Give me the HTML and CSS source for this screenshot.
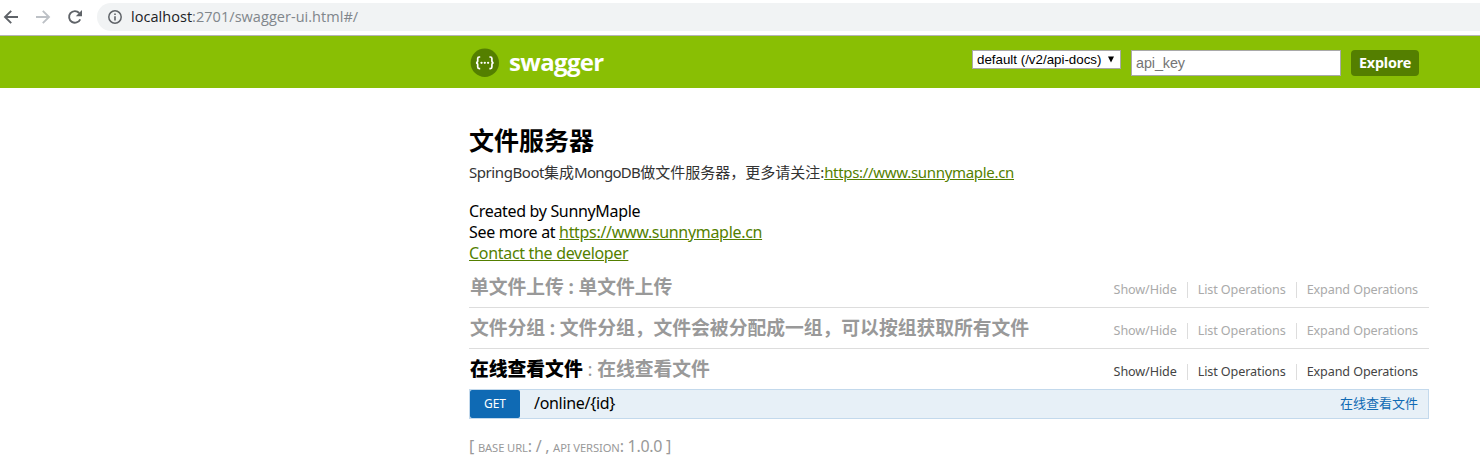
FILE: index.html
```html
<!DOCTYPE html>
<html lang="zh">
<head>
<meta charset="utf-8">
<title>Swagger UI</title>
<link rel="stylesheet" href="styles.css">
</head>
<body>
<div class="browser">
  <svg class="nav" width="84" height="34" viewBox="0 0 84 34" fill="none" stroke="#5f6368" stroke-width="1.9">
    <path d="M18 17H5.500M11.200 10.800L5 17l6.200 6.200"/>
    <path d="M36 17h12.500M42.800 10.800L49 17l-6.200 6.200" stroke="#bdc1c6"/>
    <path d="M80.200 19.300A5.800 5.800 0 1 1 79.200 13"/>
    <path d="M82 10v6.200h-6.200z" fill="#5f6368" stroke="none"/>
  </svg>
  <div class="address">
    <svg width="14" height="14" viewBox="0 0 14 14"><circle cx="7" cy="7" r="6.200" fill="none" stroke="#5f6368" stroke-width="1.500"/><path d="M6.200 6.200h1.600v4.300H6.200zM6.200 3.500h1.600v1.600H6.200z" fill="#5f6368"/></svg>
    <span class="url"><b>localhost</b>:2701/swagger-ui.html#/</span>
  </div>
</div>
<header class="header">
  <div class="bar">
    <a class="logo">
      <svg width="30" height="30" viewBox="0 0 30 30"><circle cx="14.800" cy="14.800" r="14.200" fill="#547f00"/><g fill="none" stroke="#fff" stroke-width="1.700"><path d="M10.200 9H9.200q-1.500 0-1.500 1.500v2.300q0 1.900-1.700 2 1.700.1 1.700 2v2.300q0 1.500 1.500 1.500h1M19.400 9h1q1.500 0 1.500 1.500v2.300q0 1.900 1.700 2-1.700.1-1.700 2v2.300q0 1.500-1.500 1.500h-1"/></g><g fill="#fff"><circle cx="11.500" cy="14.800" r="1.150"/><circle cx="14.800" cy="14.800" r="1.150"/><circle cx="18.100" cy="14.800" r="1.150"/></g></svg>
      <span class="brand">swagger</span>
    </a>
    <div class="form">
      <div class="select"><span class="option">default (/v2/api-docs)</span><svg width="6" height="7" viewBox="0 0 6 7"><path d="M0 .5h6L3 6.500z"/></svg></div>
      <input class="key" placeholder="api_key">
      <a class="explore">Explore</a>
    </div>
  </div>
</header>
<main class="content">
  <h1 class="title">文件服务器</h1>
  <p class="desc"><span class="product">SpringBoot</span>集成<span class="database">MongoDB</span>做文件服务器，更多请关注:<a class="link">https://www.sunnymaple.cn</a></p>
  <div class="info">
    <div>Created by SunnyMaple</div>
    <div>See more at <a class="link">https://www.sunnymaple.cn</a></div>
    <div><a class="link">Contact the developer</a></div>
  </div>
  <section class="resource">
    <h2>单文件上传<i class="colon">:</i>单文件上传</h2>
    <ul class="options"><li>Show/Hide</li><li>List Operations</li><li>Expand Operations</li></ul>
  </section>
  <section class="resource">
    <h2>文件分组<i class="colon">:</i>文件分组，文件会被分配成一组，可以按组获取所有文件</h2>
    <ul class="options"><li>Show/Hide</li><li>List Operations</li><li>Expand Operations</li></ul>
  </section>
  <section class="resource active">
    <h2><strong>在线查看文件</strong><i class="colon thin">:</i>在线查看文件</h2>
    <ul class="options"><li>Show/Hide</li><li>List Operations</li><li>Expand Operations</li></ul>
  </section>
  <div class="operation"><span class="method">GET</span><span class="path">/online/{id}</span><span class="summary">在线查看文件</span></div>
  <footer class="footer">[ <small>BASE URL</small>: / , <small>API VERSION</small>: 1.0.0 ]</footer>
</main>
</body>
</html>
```
FILE: styles.css
```css
* { box-sizing: border-box; }
body { margin: 0; height: 462px; overflow: hidden; background: #fff; color: #000; font: 16px/21px "Noto Sans", "Noto Sans CJK SC", sans-serif; }
.browser { display: flex; height: 35px; background: #fff; }
.nav { flex: none; }
.address { display: flex; align-items: center; gap: 9px; flex: 1; height: 28px; margin: 3px 0 0 13px; padding-left: 11px; border-radius: 14px 0 0 14px; background: #f1f3f4; }
.url { font: 14.5px/28px "Open Sans", sans-serif; letter-spacing: .04px; color: #80868b; }
.url b { font-weight: 400; color: #202124; }
.header { height: 53px; border-top: 1px solid #b6b4b6; background: #89bf04; }
.bar { display: flex; justify-content: space-between; width: 950px; margin-left: 470px; }
.logo { display: flex; gap: 9px; padding-top: 12px; }
.brand { font: 700 24px/28px "Open Sans", sans-serif; letter-spacing: -.65px; color: #fff; }
.form { display: flex; align-items: flex-start; padding-top: 14px; margin-right: 1px; }
.select { display: flex; align-items: center; justify-content: space-between; width: 149px; height: 19px; padding: 0 6px 0 4px; border: 1px solid #a9a9a9; background: #fff; font: 13.333px/17px "Liberation Sans", sans-serif; }
.key { width: 210px; height: 26px; margin: 0 10px; padding: 0 4px; border: 1px solid #a9a9a9; font: 14.4px "Liberation Sans", sans-serif; letter-spacing: -.1px; }
.key::placeholder { color: #757575; }
.explore { width: 68px; height: 26px; border-radius: 4px; background: #547f00; color: #fff; text-align: center; font: 700 14.4px/26px "Noto Sans", sans-serif; letter-spacing: -.2px; }
.content { width: 960px; margin-left: 469px; padding-top: 36px; }
.title { margin: 0; font: 700 25px/31px "Noto Sans CJK SC", sans-serif; }
.desc { margin: 7px 0 18px; color: #333; font-size: 15px; line-height: 21px; white-space: nowrap; }
.product { letter-spacing: -.43px; }
.database { letter-spacing: -.7px; }
.link { color: #547f00; text-decoration: underline; letter-spacing: -.31px; }
.info { height: 63px; letter-spacing: -.33px; }
.resource { display: flex; justify-content: space-between; height: 41px; border-bottom: 1px solid #ddd; color: #999; }
.info + .resource { height: 44px; padding-top: 3px; }
.resource.active { height: 40px; border: 0; }
.resource h2 { margin: 0; padding-left: 1px; font: 700 18.8px/37px "Noto Sans CJK SC", sans-serif; }
.resource strong { color: #000; }
.colon { display: inline-block; width: 14.500px; text-align: center; font-style: normal; font-family: "Noto Sans", sans-serif; line-height: 1; }
.thin { font-weight: 400; }
.options { display: flex; height: 16px; margin: 15px 11px 0 0; padding: 0; list-style: none; font-size: 12.6px; line-height: 16px; letter-spacing: -.11px; color: #aaa; }
.options li + li { margin-left: 10px; padding-left: 10px; border-left: 1px solid #ddd; }
.active .options { color: #444; }
.operation { display: flex; height: 30px; border: 1px solid #c3d9ec; background: #e7f0f7; line-height: 27px; }
.method { width: 50px; border-radius: 2px; background: #0f6ab4; color: #fff; text-align: center; font-size: 12px; line-height: 28px; letter-spacing: -.1px; }
.path { margin-left: 14px; letter-spacing: -.31px; }
.summary { margin: 0 10px 0 auto; color: #0f6ab4; font-size: 13px; line-height: 26px; }
.footer { margin-top: 17px; color: #999; white-space: pre; letter-spacing: -.28px; }
.footer small { font-size: 11.2px; letter-spacing: -.1px; }
```
